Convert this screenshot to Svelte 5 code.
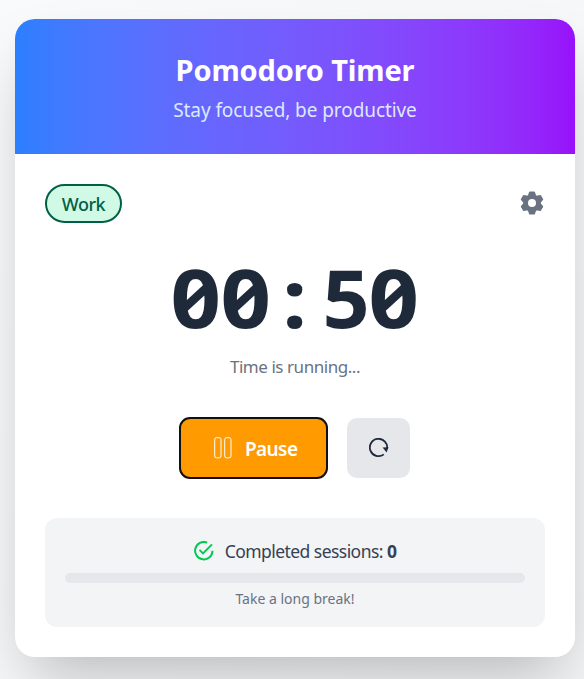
<script>
  let time = $state('00:50');
  let sessions = $state(0);
  let progress = $state(0);
  const teeth = [0, 60, 120, 180, 240, 300];
</script>

<main>
  <section class="card">
    <header>
      <h1><span>Pomodoro Timer</span></h1>
      <p>Stay focused, be productive</p>
    </header>

    <div class="body">
      <div class="top">
        <span class="badge">Work</span>
        <button class="settings" aria-label="Settings">
          <svg width="26" height="26" viewBox="-13 -13 26 26" fill="currentColor">
            <circle r="6.4" fill="none" stroke="currentColor" stroke-width="4.8" />
            {#each teeth as angle}
              <path transform="rotate({angle})" d="M-4.2 -7.2L-2.9 -11Q-2.7 -11.6 -2.1 -11.6H2.1Q2.7 -11.6 2.9 -11L4.2 -7.2Z" />
            {/each}
          </svg>
        </button>
      </div>

      <div class="time">
        {#each time.split('') as char}<span>{char}</span>{/each}
      </div>
      <p class="status"><span>Time is running...</span></p>

      <div class="controls">
        <button class="pause">
          <svg width="18" height="22" viewBox="0 0 18 22" fill="none" stroke="currentColor" stroke-width="1">
            <rect x="0.7" y="0.7" width="6.3" height="20.2" rx="2" />
            <rect x="10.7" y="0.7" width="6.3" height="20.2" rx="2" />
          </svg>
          <span>Pause</span>
        </button>
        <button class="reset" aria-label="Reset">
          <svg width="20" height="20" viewBox="0 0 20 20" fill="none" stroke="currentColor" stroke-width="1.8">
            <path d="M14.8 16.4A8.7 8.7 0 1 1 18.1 11" />
            <path d="M13.6 9.6L19.4 9.2L17.6 14.4Z" fill="currentColor" stroke="none" />
          </svg>
        </button>
      </div>

      <div class="stats">
        <div class="sessions">
          <svg width="20" height="20" viewBox="0 0 20 20" fill="none" stroke="currentColor" stroke-width="2">
            <path d="M13.2 1.7A8.7 8.7 0 1 0 18.5 9.7" />
            <path d="M5.5 8.9L9 12.4L18 3.4" />
          </svg>
          <span class="label">Completed sessions: <b>{sessions}</b></span>
        </div>
        <div class="bar"><div class="fill" style="width: {progress}%"></div></div>
        <p class="hint"><span>Take a long break!</span></p>
      </div>
    </div>
  </section>
</main>

<style>
  :global(body) {
    margin: 0;
    overflow: hidden;
  }
  main {
    box-sizing: border-box;
    width: 584px;
    height: 679px;
    padding: 19px 9px 22px 15px;
    overflow: hidden;
    background: linear-gradient(135deg, #f9fafb, #f3f4f6);
    font-family: 'Noto Sans', 'Open Sans', sans-serif;
  }
  h1, p {
    margin: 0;
  }
  button {
    border: 0;
    padding: 0;
    font: inherit;
    cursor: pointer;
  }
  svg {
    display: block;
    flex: none;
  }
  .card {
    width: 560px;
    height: 638px;
    border-radius: 20px;
    overflow: hidden;
    background: #fff;
    box-shadow: 0 31px 62px -15px rgba(0, 0, 0, 0.25);
  }
  header {
    box-sizing: border-box;
    height: 135px;
    padding-top: 30px;
    text-align: center;
    color: #fff;
    background: linear-gradient(to right in oklab, #2b7fff, #9810fa);
  }
  h1 {
    font-size: 29px;
    line-height: 42px;
    font-weight: 700;
    letter-spacing: -0.15px;
  }
  header p {
    font-size: 19px;
    line-height: 39px;
    color: #dbeafe;
    letter-spacing: -0.08px;
  }
  .body {
    padding: 30px;
  }
  .top {
    display: flex;
    justify-content: space-between;
    align-items: center;
    height: 39px;
  }
  .badge {
    box-sizing: border-box;
    width: 77px;
    height: 39px;
    border: 2px solid #006045;
    border-radius: 20px;
    background: #d0fae5;
    color: #006045;
    font-size: 18px;
    line-height: 37px;
    font-weight: 500;
    text-align: center;
    letter-spacing: -0.5px;
  }
  .settings {
    margin: 0 0 2px 0;
    background: none;
    color: #6a7282;
  }
  .time {
    display: flex;
    justify-content: center;
    margin-top: 30px;
    height: 90px;
    font-size: 81px;
    line-height: 88px;
    font-weight: 700;
    font-feature-settings: 'zero' 1, 'tnum' 1;
    color: #1e2939;
  }
  .time span {
    width: 49.5px;
    text-align: center;
    transform: scaleX(1.09);
  }
  .time span:nth-child(4) {
    transform: translateX(1.5px) scaleX(1.02);
  }
  .status {
    margin-top: 10px;
    font-size: 17px;
    line-height: 28px;
    text-align: center;
    color: #6a7282;
    letter-spacing: -0.45px;
  }
  .controls {
    display: flex;
    align-items: center;
    gap: 19px;
    margin: 36px 0 39px 134px;
    height: 62px;
  }
  .pause {
    box-sizing: border-box;
    display: flex;
    align-items: center;
    gap: 13px;
    width: 149px;
    height: 62px;
    padding-left: 33px;
    border: 2px solid #101010;
    border-radius: 11px;
    background: #ff9a00;
    color: #fff;
    font-size: 19px;
    font-weight: 600;
    letter-spacing: -0.6px;
  }
  .pause span {
    padding-top: 2px;
  }
  .reset {
    display: flex;
    align-items: center;
    justify-content: center;
    width: 63px;
    height: 60px;
    border-radius: 10px;
    background: #e5e7eb;
    color: #1e2939;
  }
  .reset svg {
    margin-bottom: 1px;
  }
  .stats {
    box-sizing: border-box;
    height: 109px;
    padding: 20px;
    border-radius: 12px;
    background: #f3f4f6;
  }
  .sessions {
    display: flex;
    justify-content: center;
    gap: 11px;
    height: 35px;
    color: #364153;
    font-size: 17.5px;
    line-height: 27px;
  }
  .sessions svg {
    margin-top: 3px;
    color: #00c950;
  }
  .label {
    letter-spacing: -0.55px;
  }
  .bar {
    height: 10px;
    border-radius: 5px;
    overflow: hidden;
    background: #e5e7eb;
  }
  .fill {
    height: 100%;
    background: #00c950;
  }
  .hint {
    margin-top: 5px;
    font-size: 14px;
    line-height: 22px;
    text-align: center;
    color: #6a7282;
  }
</style>
